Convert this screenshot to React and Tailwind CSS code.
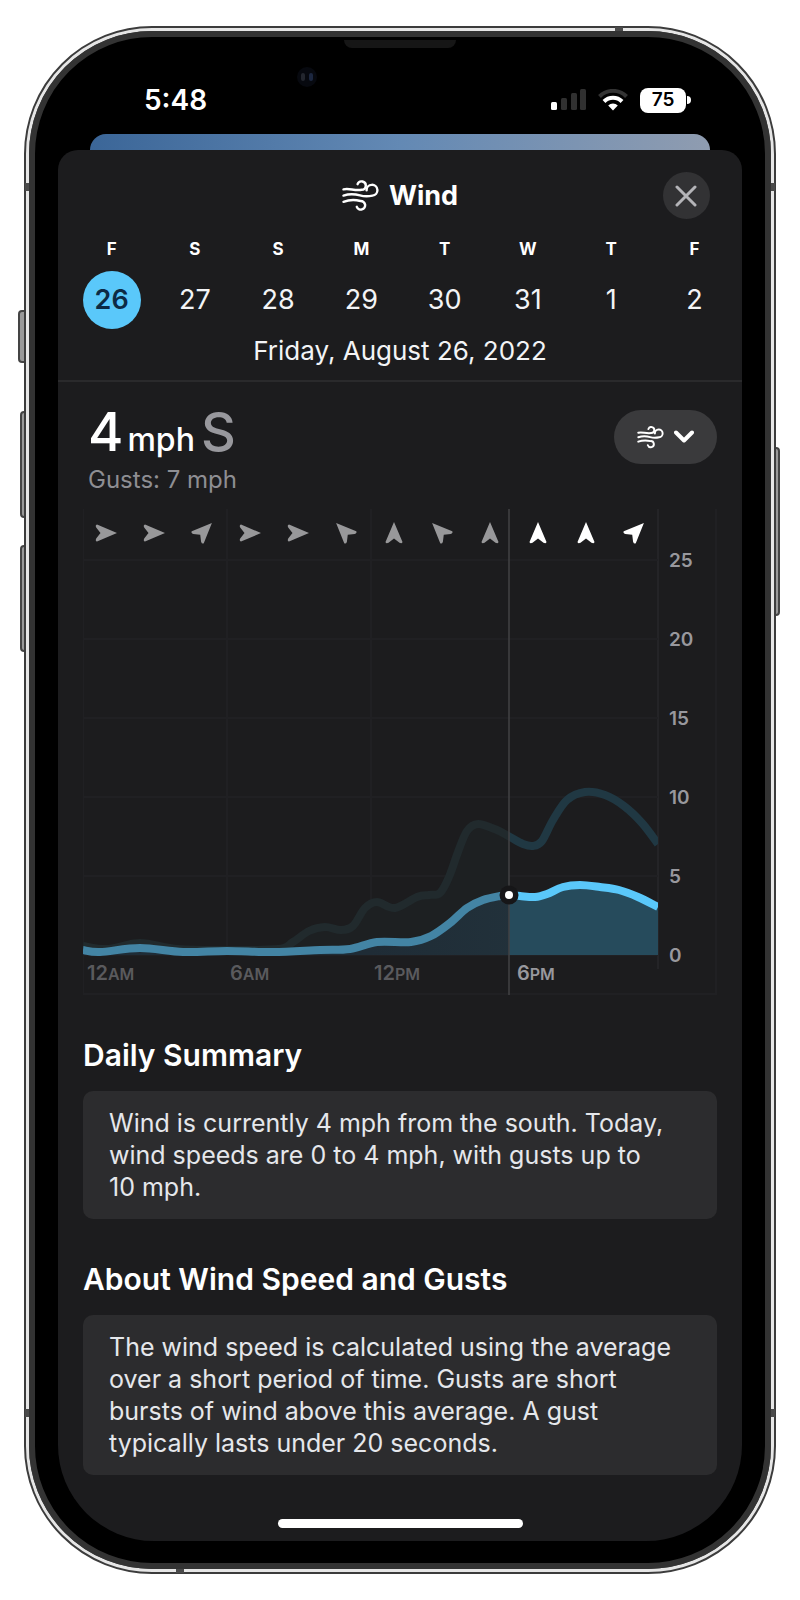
const days = [
    { letter: 'F', date: 26, name: 'Friday' },
    { letter: 'S', date: 27, name: 'Saturday' },
    { letter: 'S', date: 28, name: 'Sunday' },
    { letter: 'M', date: 29, name: 'Monday' },
    { letter: 'T', date: 30, name: 'Tuesday' },
    { letter: 'W', date: 31, name: 'Wednesday' },
    { letter: 'T', date: 1, name: 'Thursday' },
    { letter: 'F', date: 2, name: 'Friday' },
];

// Chart points, in the units of the chart's viewBox
const wind = [
    [0, 441], [17, 443], [57, 439], [100, 443], [144, 442], [190, 443], [237, 441], [267, 440], [294, 433],
    [328, 433], [348, 427], [367, 414], [384, 399], [400, 391], [417, 387], [426, 386], [437, 387], [452, 388],
    [464, 385], [480, 378], [497, 376], [517, 378], [536, 381], [555, 388], [575, 398],
];

const gusts = [
    [0, 437], [25, 440], [57, 434], [95, 440], [144, 441], [195, 440], [210, 433], [226, 422], [242, 418],
    [258, 421], [270, 417], [282, 399], [294, 393], [312, 399], [334, 388], [346, 386], [357, 384], [366, 368],
    [375, 343], [384, 322], [395, 315], [414, 321], [427, 328], [440, 335], [450, 337], [459, 332], [470, 311],
    [484, 291], [502, 283], [522, 286], [541, 297], [559, 314], [575, 335],
];

// Wind direction arrows, degrees from north
const directions = [90, 90, 45, 90, 90, -45, 0, -45, 0, 0, 0, 45];
const speeds = [25, 20, 15, 10, 5, 0];
const hours = [
    { x: 4, value: '12', unit: 'AM' },
    { x: 147, value: '6', unit: 'AM' },
    { x: 291, value: '12', unit: 'PM' },
    { x: 434, value: '6', unit: 'PM', upcoming: true },
];

const NOW = 426;
const BASE = 446;

function smoothPath(points) {
    let d = `M${points[0][0]} ${points[0][1]}`;
    for (let i = 0; i < points.length - 1; i++) {
        const p0 = points[i - 1] || points[i];
        const p1 = points[i];
        const p2 = points[i + 1];
        const p3 = points[i + 2] || p2;
        d += ` C${p1[0] + (p2[0] - p0[0]) / 6} ${p1[1] + (p2[1] - p0[1]) / 6}`;
        d += ` ${p2[0] - (p3[0] - p1[0]) / 6} ${p2[1] - (p3[1] - p1[1]) / 6} ${p2[0]} ${p2[1]}`;
    }
    return d;
}

function WindIcon({ className }) {
    return (
        <svg viewBox="0 0 37 32" className={className} fill="none" stroke="currentColor" strokeLinecap="round" aria-hidden="true">
            <path d="M1.5 9.4 C7 8 12 10.8 19.5 9.8 A4.2 4.2 0 1 0 15.6 4.2" />
            <path d="M1.5 15.6 C8 13.4 13 14 18 15.4 C23 16.8 26 16.6 30.5 15.6 A5.4 5.4 0 1 0 24.6 10.4" />
            <path d="M1.5 21.8 C8 19.4 13 19.6 18.5 21 A4.3 4.3 0 1 1 14.8 26.8" />
        </svg>
    );
}

function StatusBar() {
    return (
        <div className="flex h-[97px] items-center justify-between pt-[29px] pr-[51px] pl-[86px]">
            <span className="text-[28px] leading-8 font-semibold text-white">5:48</span>
            <div className="flex items-center gap-3">
                <svg width="36" height="22" viewBox="0 0 36 22" aria-hidden="true">
                    <rect x="1" y="13" width="6" height="8" rx="1.5" fill="#fff" />
                    <rect x="11" y="9" width="6" height="12" rx="1.5" fill="#303030" />
                    <rect x="21" y="4" width="6" height="17" rx="1.5" fill="#303030" />
                    <rect x="30" y="0" width="6" height="21" rx="1.5" fill="#303030" />
                </svg>
                <svg width="30" height="22" viewBox="0 0 30 22" fill="none" aria-hidden="true">
                    <path d="M1.5 7.5 A19 19 0 0 1 28.5 7.5" stroke="#333" strokeWidth="4" />
                    <path d="M6 12.5 A12.6 12.6 0 0 1 24 12.5" stroke="#fff" strokeWidth="4" />
                    <path d="M15 21.5 L10.2 16.6 A6.8 6.8 0 0 1 19.8 16.6 Z" fill="#fff" />
                </svg>
                <div className="flex items-center gap-px">
                    <span className="flex h-[25px] w-[46px] items-center justify-center rounded-lg bg-white text-[19px] font-semibold text-black">75</span>
                    <span className="h-2 w-1 rounded-r-full bg-white" />
                </div>
            </div>
        </div>
    );
}

function DayPicker() {
    return (
        <div className="mt-5 grid grid-cols-8 pr-1.5 pl-3">
            {days.map((day, i) => (
                <button key={day.date} type="button" aria-label={`${day.name} ${day.date}`} className="flex flex-col items-center">
                    <span className="text-[17px] leading-5 font-bold text-white">{day.letter}</span>
                    <span
                        className={
                            i === 0
                                ? 'mt-3 flex size-[58px] items-center justify-center rounded-full bg-[#5ac8fa] text-[27px] font-semibold text-[#0c2a45]'
                                : 'mt-3 flex size-[58px] items-center justify-center text-[27px] text-gray-100'
                        }
                    >
                        {day.date}
                    </span>
                </button>
            ))}
        </div>
    );
}

function WindChart() {
    const windLine = smoothPath(wind);
    const gustLine = smoothPath(gusts);

    return (
        <svg viewBox="0 0 634 486" className="mt-[15px] block h-auto w-full" role="img" aria-label="Hourly wind speed">
            <defs>
                <clipPath id="past">
                    <rect x="0" y="0" width={NOW} height="486" />
                </clipPath>
                <clipPath id="future">
                    <rect x={NOW} y="0" width={575 - NOW} height="486" />
                </clipPath>
                <linearGradient id="pastFill" x1="0" x2="1" y1="0" y2="0">
                    <stop offset="0.5" stopColor="#1f2c36" />
                    <stop offset="1" stopColor="#24363f" />
                </linearGradient>
            </defs>

            {/* Grid */}
            <g stroke="#202023" strokeWidth="2" fill="none">
                <path d="M0 0 V486 M144 0 V446 M288 0 V446 M633 0 V485 H0" />
                <path d="M575 0 V460" stroke="#242427" />
                {speeds.map((speed) => (
                    <path key={speed} d={`M0 ${BASE - speed * 15.8} H575`} />
                ))}
            </g>

            {/* Areas and curves, dimmed before the current time */}
            <g clipPath="url(#past)">
                <path d={`${gustLine} V446 H0 Z`} fill="#1d2022" />
                <path d={`${windLine} V446 H0 Z`} fill="url(#pastFill)" />
                <path d={gustLine} fill="none" stroke="#212a2d" strokeWidth="8" />
                <path d={windLine} fill="none" stroke="#4384a4" strokeWidth="8" />
            </g>
            <g clipPath="url(#future)">
                <path d={`${windLine} V446 H0 Z`} fill="#264b5c" />
                <path d={gustLine} fill="none" stroke="#203843" strokeWidth="8" />
                <path d={windLine} fill="none" stroke="#5ac8fa" strokeWidth="8" />
            </g>

            {/* Current time */}
            <path d={`M${NOW} 0 V486`} stroke="#424244" strokeWidth="1.5" />
            <circle cx={NOW} cy="386" r="9.5" fill="#161618" />
            <circle cx={NOW} cy="386" r="4" fill="#fff" />

            {directions.map((angle, i) => (
                <path
                    key={i}
                    d="M0 -11 L8.5 9 Q8 11 5.5 9.8 L0 5.5 L-5.5 9.8 Q-8 11 -8.5 9 Z"
                    transform={`translate(${23 + i * 48} 24) rotate(${angle}) translate(0 ${angle % 90 ? -3 : 0})`}
                    fill={i < 9 ? '#98989a' : '#fff'}
                />
            ))}

            {speeds.map((speed) => (
                <text key={speed} x="586" y={BASE + 7 - speed * 15.8} fontSize="19" fontWeight="600" fill="#98989d">
                    {speed}
                </text>
            ))}

            {hours.map((hour) => (
                <text key={hour.x} x={hour.x} y="471" fontSize="20" fontWeight="600" fill={hour.upcoming ? '#98989d' : '#5a5a5d'}>
                    {hour.value}
                    <tspan fontSize="16">{hour.unit}</tspan>
                </text>
            ))}
        </svg>
    );
}

function InfoSection({ title, children }) {
    return (
        <section className="mt-[42px]">
            <h2 className="text-[30px] leading-9 font-semibold text-white">{title}</h2>
            <p className="mt-[18px] rounded-[10px] bg-[#2c2c2e] px-[26px] py-4 text-[25px] leading-8 text-gray-200">
                {children}
            </p>
        </section>
    );
}

export default function App() {
    return (
        <div className="min-h-screen bg-white px-6 py-[26px] font-['Inter',sans-serif]">
            <div className="relative">
                {/* Side buttons */}
                <div className="absolute top-[284px] -left-1.5 h-[53px] w-2 rounded-l-sm border-2 border-[#444] bg-[#999]" />
                <div className="absolute top-[385px] -left-1 h-[107px] w-2 rounded-l-sm border-2 border-[#444] bg-[#999]" />
                <div className="absolute top-[519px] -left-1 h-[107px] w-2 rounded-l-sm border-2 border-[#444] bg-[#999]" />
                <div className="absolute top-[421px] -right-1 h-[169px] w-2 rounded-r-sm border-2 border-[#444] bg-[#999]" />

                {/* Phone frame */}
                <div className="relative rounded-[128px] border-2 border-[#3c3c3c] bg-[#3c3c3c]">
                    <div className="rounded-[126px] border-3 border-[#e6e6e6] bg-[#3c3c3c]">
                        <div className="rounded-[123px] border-6 border-[#333] bg-black px-[23px] pb-[22px]">
                            <StatusBar />

                            {/* Weather page behind the sheet */}
                            <div className="mx-8 h-4 rounded-t-2xl bg-linear-to-r from-[#3b6698] via-[#6389b4] to-[#8f9cb0]" />

                            <main className="rounded-t-[20px] rounded-b-[96px] bg-[#1c1c1e] pb-[13px]">
                                <header className="flex items-center justify-between px-8 pt-[22px]">
                                    <span className="w-[47px]" />
                                    <h1 className="flex items-center gap-2.5 text-[27px] leading-8 font-bold text-white">
                                        <WindIcon className="h-8 w-[37px] stroke-[2.4]" />
                                        Wind
                                    </h1>
                                    <button type="button" aria-label="Close" className="flex size-[47px] items-center justify-center rounded-full bg-[#323234] text-[#b4b4b8]">
                                        <svg width="22" height="22" viewBox="0 0 22 22" stroke="currentColor" strokeWidth="3" strokeLinecap="round" aria-hidden="true">
                                            <path d="M2 2 L20 20 M20 2 L2 20" />
                                        </svg>
                                    </button>
                                </header>

                                <DayPicker />
                                <p className="mt-1 border-b-2 border-[#2a2a2c] pb-[11px] text-center text-[26px] leading-9 text-gray-100">
                                    Friday, August 26, 2022
                                </p>

                                <div className="px-[25px]">
                                    <div className="mt-6 flex items-start justify-between">
                                        <div className="pl-[5px]">
                                            <p className="flex items-baseline text-[54px] leading-[52px] font-medium text-white">
                                                4<span className="ml-1 text-[32px]">mph</span>
                                                <span className="ml-1.5 text-[#98989d]">S</span>
                                            </p>
                                            <p className="text-[24px] leading-7 text-[#8e8e93]">Gusts: 7 mph</p>
                                        </div>
                                        <button type="button" aria-label="Choose a metric" className="mt-1 flex h-[54px] w-[103px] items-center justify-center gap-2.5 rounded-full bg-[#3a3a3c] text-white">
                                            <WindIcon className="h-[23px] w-[27px] stroke-[2.7]" />
                                            <svg width="20" height="14" viewBox="0 0 20 14" fill="none" stroke="currentColor" strokeWidth="4" strokeLinecap="round" strokeLinejoin="round" aria-hidden="true">
                                                <path d="M2 2.5 L10 10.5 L18 2.5" />
                                            </svg>
                                        </button>
                                    </div>

                                    <WindChart />

                                    <InfoSection title="Daily Summary">
                                        Wind is currently 4 mph from the south. Today, wind speeds are 0 to 4 mph, with gusts up to 10&nbsp;mph.
                                    </InfoSection>
                                    <InfoSection title="About Wind Speed and Gusts">
                                        The wind speed is calculated using the average over a short period of time. Gusts are short bursts
                                        of wind above this average. A gust typically lasts under 20 seconds.
                                    </InfoSection>
                                </div>

                                <div className="mx-auto mt-11 h-[9px] w-[245px] rounded-full bg-white" />
                            </main>
                        </div>
                    </div>
                </div>

                {/* Antenna bands */}
                <div className="absolute top-px right-[153px] h-1 w-2 bg-[#4a4a4a]" />
                <div className="absolute bottom-px left-[152px] h-1 w-2 bg-[#4a4a4a]" />
                <div className="absolute top-[157px] left-px h-2 w-1 bg-[#4a4a4a]" />
                <div className="absolute top-[157px] right-px h-2 w-1 bg-[#4a4a4a]" />
                <div className="absolute bottom-[157px] left-px h-2 w-1 bg-[#4a4a4a]" />
                <div className="absolute right-px bottom-[157px] h-2 w-1 bg-[#4a4a4a]" />

                {/* Earpiece and camera */}
                <div className="absolute top-3.5 left-1/2 h-2 w-28 -translate-x-1/2 rounded-b-lg bg-[#161616]" />
                <div className="absolute top-[41px] left-[273px] flex size-5 items-center justify-center gap-1 rounded-full bg-[#07090f]">
                    <span className="h-2 w-1 rounded-full bg-[#23262e]" />
                    <span className="h-2 w-1 rounded-full bg-[#1c2740]" />
                </div>
            </div>
        </div>
    );
}
